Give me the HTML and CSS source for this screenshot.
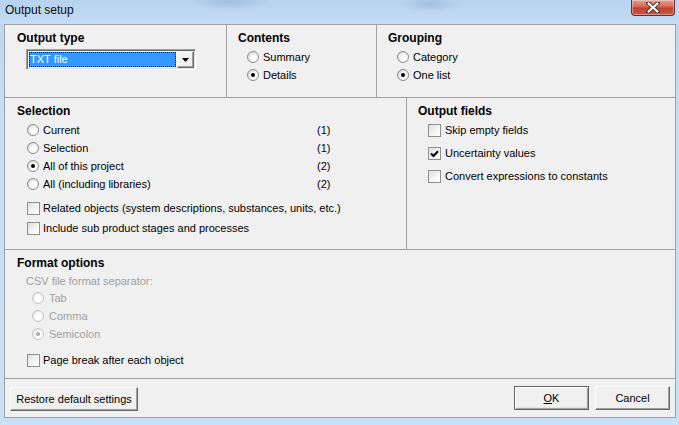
FILE: index.html
```html
<!DOCTYPE html>
<html>
<head>
<meta charset="utf-8">
<title>Output setup</title>
<link rel="stylesheet" href="styles.css">
</head>
<body>
<div class="window">
  <div class="titlebar">
    <span class="title">Output setup</span>
    <div class="close">
      <svg width="16" height="11" viewBox="0 0 16 11"><path d="M3 1 L13 10 M13 1 L3 10" stroke="#4a3434" stroke-width="4" stroke-linecap="round"/><path d="M3.5 1.5 L12.5 9.5 M12.5 1.5 L3.5 9.5" stroke="#ffffff" stroke-width="2.2" stroke-linecap="round"/></svg>
    </div>
  </div>
  <div class="client">
    <div class="row row-top">
      <section class="panel p-type">
        <h3>Output type</h3>
        <div class="combo">
          <span class="combo-sel">TXT file</span>
          <span class="combo-btn"><svg width="7" height="4" viewBox="0 0 7 4"><path d="M0 0 H7 L3.5 4 Z" fill="#000"/></svg></span>
        </div>
      </section>
      <section class="panel p-contents">
        <h3>Contents</h3>
        <div class="opts">
          <label class="opt"><span class="radio"></span><span class="txt">Summary</span></label>
          <label class="opt"><span class="radio on"></span><span class="txt">Details</span></label>
        </div>
      </section>
      <section class="panel p-grouping">
        <h3>Grouping</h3>
        <div class="opts">
          <label class="opt"><span class="radio"></span><span class="txt">Category</span></label>
          <label class="opt"><span class="radio on"></span><span class="txt">One list</span></label>
        </div>
      </section>
    </div>
    <div class="row row-mid">
      <section class="panel p-selection">
        <h3>Selection</h3>
        <div class="opts">
          <label class="opt"><span class="radio"></span><span class="txt wide">Current</span><span class="count">(1)</span></label>
          <label class="opt"><span class="radio"></span><span class="txt wide">Selection</span><span class="count">(1)</span></label>
          <label class="opt"><span class="radio on"></span><span class="txt wide">All of this project</span><span class="count">(2)</span></label>
          <label class="opt"><span class="radio"></span><span class="txt wide">All (including libraries)</span><span class="count">(2)</span></label>
        </div>
        <div class="checks">
          <label class="chk"><span class="box"></span><span class="txt">Related objects (system descriptions, substances, units, etc.)</span></label>
          <label class="chk"><span class="box"></span><span class="txt">Include sub product stages and processes</span></label>
        </div>
      </section>
      <section class="panel p-fields">
        <h3>Output fields</h3>
        <div class="checks">
          <label class="chk"><span class="box"></span><span class="txt">Skip empty fields</span></label>
          <label class="chk"><span class="box on"><svg width="9" height="8" viewBox="0 0 9 8"><path d="M1 3.5 L3.5 6 L8 1.2" stroke="#000" stroke-width="2" fill="none"/></svg></span><span class="txt">Uncertainty values</span></label>
          <label class="chk"><span class="box"></span><span class="txt">Convert expressions to constants</span></label>
        </div>
      </section>
    </div>
    <section class="panel p-format">
      <h3>Format options</h3>
      <div class="sub disabled">CSV file format separator:</div>
      <div class="opts disabled">
        <label class="opt"><span class="radio"></span><span class="txt">Tab</span></label>
        <label class="opt"><span class="radio"></span><span class="txt">Comma</span></label>
        <label class="opt"><span class="radio on"></span><span class="txt">Semicolon</span></label>
      </div>
      <div class="checks">
        <label class="chk"><span class="box"></span><span class="txt">Page break after each object</span></label>
      </div>
    </section>
    <div class="buttons">
      <button class="btn btn-restore">Restore default settings</button>
      <span class="spacer"></span>
      <button class="btn btn-ok default"><u>O</u>K</button>
      <button class="btn btn-cancel">Cancel</button>
    </div>
  </div>
</div>
</body>
</html>
```

FILE: styles.css
```css
html, body {
  margin: 0;
  padding: 0;
}
body {
  width: 679px;
  height: 425px;
  overflow: hidden;
  background: #c3dbf4;
  font-family: "Liberation Sans", Arial, sans-serif;
  font-size: 11px;
  color: #000;
}
.window {
  display: flex;
  flex-direction: column;
  height: 425px;
  background: linear-gradient(180deg, #bcd6f2 0%, #c6dff6 30%, #c9e0f6 100%);
}
.titlebar {
  height: 24px;
  display: flex;
  align-items: flex-start;
  padding-left: 5px;
  padding-right: 4px;
  background:
    radial-gradient(ellipse 40px 8px at 230px 2px, rgba(120,150,190,0.35), transparent),
    radial-gradient(ellipse 30px 8px at 430px 4px, rgba(120,150,190,0.35), transparent),
    linear-gradient(180deg, #b7d3f0, #c4dcf4);
}
.title {
  font-size: 12px;
  line-height: 15px;
  padding-top: 3px;
  color: #0c0c0c;
}
.close {
  margin-left: auto;
  width: 44px;
  height: 16px;
  box-sizing: border-box;
  border: 1px solid #6e2a24;
  border-top: none;
  border-radius: 0 0 4px 4px;
  background: linear-gradient(180deg, #e3a08f 0%, #d7715c 40%, #c2412c 55%, #cc5a44 100%);
  box-shadow: inset 0 0 0 1px rgba(255,255,255,0.35);
  display: flex;
  align-items: center;
  justify-content: center;
}
.close svg { display: block; }
.client {
  margin: 0 3px 5px 4px;
  border: 1px solid #a0a0a0;
  background: #f0f0f0;
  display: flex;
  flex-direction: column;
  height: 394px;
  box-sizing: border-box;
}
.row {
  display: flex;
  border-bottom: 1px solid #a0a0a0;
}
.row-top { height: 73px; box-sizing: border-box; }
.row-mid { height: 152px; box-sizing: border-box; }
.panel {
  box-sizing: border-box;
  padding: 7px 0 0 11px;
}
.panel h3 {
  margin: 0;
  font-size: 12px;
  line-height: 13px;
  font-weight: bold;
}
.p-type { width: 222px; border-right: 1px solid #a0a0a0; padding-left: 12px; }
.p-contents { width: 150px; border-right: 1px solid #a0a0a0; }
.p-grouping { flex: 1; }
.p-selection { width: 402px; border-right: 1px solid #a0a0a0; padding-left: 12px; }
.p-fields { flex: 1; }
.p-format {
  height: 129px;
  border-bottom: 1px solid #a0a0a0;
  padding-left: 12px;
}

/* combo box */
.combo {
  margin: 4px 0 0 9px;
  width: 170px;
  height: 21px;
  box-sizing: border-box;
  border: 1px solid;
  border-color: #a0a0a0 #ffffff #ffffff #a0a0a0;
  box-shadow: inset 1px 1px #696969, inset -1px -1px #e3e3e3;
  padding: 1px;
  background: #fff;
  display: flex;
}
.combo-sel {
  flex: 1;
  margin: 1px;
  background: #3399ff;
  color: #fff;
  outline: 1px dotted #000;
  outline-offset: -1px;
  line-height: 15px;
  padding-left: 1px;
  white-space: nowrap;
}
.combo-btn {
  width: 17px;
  height: 17px;
  box-sizing: border-box;
  border: 1px solid;
  border-color: #f0f0f0 #696969 #696969 #f0f0f0;
  box-shadow: inset -1px -1px #a0a0a0, inset 1px 1px #fff;
  background: #f0f0f0;
  display: flex;
  align-items: center;
  justify-content: center;
  flex: none;
}
.combo-btn svg { display: block; }

/* options */
.opts {
  margin-top: 3px;
  padding-left: 10px;
  display: flex;
  flex-direction: column;
}
.p-contents .opts, .p-grouping .opts { padding-left: 9px; }
.opt {
  height: 18px;
  display: flex;
  align-items: center;
}
.radio {
  width: 12px;
  height: 12px;
  box-sizing: border-box;
  border-radius: 50%;
  border: 1px solid #8b8b8b;
  background: radial-gradient(circle at 65% 65%, #ffffff 20%, #f4f4f4 45%, #c9c9c9 100%);
  display: flex;
  align-items: center;
  justify-content: center;
  flex: none;
}
.radio.on::after {
  content: "";
  width: 4px;
  height: 4px;
  border-radius: 50%;
  background: #000;
}
.opt .txt { margin-left: 4px; line-height: 13px; }
.opt .txt.wide { width: 274px; }
.count { line-height: 13px; }

.checks {
  display: flex;
  flex-direction: column;
  padding-left: 10px;
}
.p-selection .checks { margin-top: 5px; }
.chk {
  height: 20px;
  display: flex;
  align-items: center;
}
.p-fields .checks { margin-top: 1px; }
.p-fields .chk { height: 23px; }
.box {
  width: 13px;
  height: 13px;
  box-sizing: border-box;
  border: 1px solid #8e8f8f;
  background: linear-gradient(135deg, #dedede 0%, #f4f4f4 55%, #ffffff 100%);
  flex: none;
  display: flex;
  align-items: center;
  justify-content: center;
}
.box svg { display: block; }
.chk .txt { margin-left: 3px; line-height: 13px; }
.p-fields .chk .txt { margin-left: 4px; }

.sub {
  margin-top: 5px;
  padding-left: 9px;
  line-height: 13px;
}
.disabled { color: #a0a0a0; }
.p-format .opts { margin-top: 1px; padding-left: 15px; }
.p-format .opt .txt { margin-left: 5px; }
.disabled .radio {
  border-color: #c2c2c2;
  background: radial-gradient(circle at 65% 65%, #ffffff 30%, #f4f4f4 55%, #dcdcdc 100%);
}
.disabled .radio.on::after { background: #a8a8a8; }
.p-format .checks { margin-top: 7px; }

/* buttons */
.buttons {
  flex: 1;
  display: flex;
  align-items: flex-start;
  padding: 7px 5px 0 5px;
  gap: 6px;
}
.spacer { flex: 1; }
.btn {
  font-family: "Liberation Sans", Arial, sans-serif;
  font-size: 11px;
  color: #000;
  height: 24px;
  box-sizing: border-box;
  background: #f0f0f0;
  border: 1px solid;
  border-color: #ffffff #696969 #696969 #ffffff;
  box-shadow: inset -1px -1px #a0a0a0;
  padding: 0;
  margin: 0;
}
.btn-restore { width: 128px; margin-top: 1px; }
.btn-ok, .btn-cancel { width: 75px; }
.btn.default {
  border: 1px solid #646464;
  box-shadow: inset 1px 1px #ffffff, inset -1px -1px #a0a0a0, inset -2px -2px #e3e3e3;
}
.btn u { text-decoration: underline; }
```
